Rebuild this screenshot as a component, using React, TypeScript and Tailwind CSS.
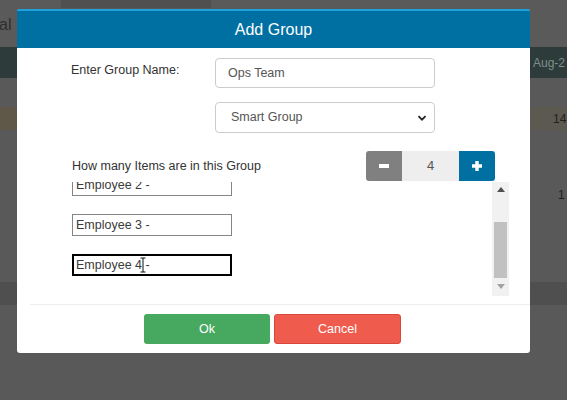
import React from 'react';

const font = { fontFamily: '"Liberation Sans", Arial, sans-serif' };

const Backdrop = () => (
  <div className="flex flex-col w-[567px] h-[400px] bg-[#595959] text-[#262626]" style={font}>
    <div className="h-[47px] bg-[#5a5a5a] flex items-center relative">
      <div className="absolute left-[61px] top-0 w-[150px] h-[8px] bg-[#505050]" />
      <span className="ml-[-1px] mt-[2px] text-[16px] text-[#2e2e2e]">al</span>
    </div>
    <div className="h-[31px] bg-[#2d3c3a] flex items-center justify-end">
      <span className="w-[34px] text-[12px] text-[#7d8f8c] overflow-hidden whitespace-nowrap">Aug-2</span>
    </div>
    <div className="h-[29px]" />
    <div className="h-[23px] bg-gradient-to-r from-[#5f5748] via-[#595959] to-[#5c5950] flex items-center justify-end">
      <span className="w-[14px] text-[12px] text-[#1f1f1f]">14</span>
    </div>
    <div className="h-[152px] flex justify-end">
      <span className="w-[9px] mt-[56px] text-[12px] text-[#1f1f1f]">1</span>
    </div>
    <div className="h-[23px] bg-[#4f4f4f]" />
    <div className="flex-1" />
  </div>
);

const EmployeeInput = ({ label, focused }: { label: string; focused?: boolean }) => (
  <div
    className={
      focused
        ? 'relative w-[160px] h-[22px] border-2 border-black flex items-center pl-[2px] text-[12.5px] text-[#3a3a3a]'
        : 'w-[160px] h-[22px] border border-[#858585] flex items-center pl-[3px] text-[12.5px] text-[#3a3a3a]'
    }
  >
    {label}
    {focused && (
      <svg className="absolute left-[66px] top-[1px]" width="6" height="16" viewBox="0 0 6 16">
        <path d="M0.5 1h5M3 1v14M0.5 15h5" stroke="#111" strokeWidth="1" fill="none" />
      </svg>
    )}
  </div>
);

const Modal = () => (
  <div
    className="absolute left-[17px] top-[9px] w-[513px] h-[344px] bg-white rounded-[3px] overflow-hidden flex flex-col"
    style={font}
  >
    <div className="h-[39px] bg-[#0070a3] border-t-2 border-[#1ea2dc] flex items-center justify-center text-white text-[16px]">
      Add Group
    </div>

    <div className="flex pt-[10px]">
      <div className="w-[198px] pl-[54px] pt-[3px] text-[12.5px] text-[#333]">Enter Group Name:</div>
      <div className="w-[220px] h-[30px] border border-[#cccccc] rounded-[4px] flex items-center pl-[12px] text-[12.5px] text-[#555]">
        Ops Team
      </div>
    </div>

    <div className="flex mt-[14px] pl-[198px]">
      <div className="w-[220px] h-[31px] border border-[#cccccc] rounded-[4px] flex items-center justify-between pl-[15px] pr-[7px] text-[12.5px] text-[#555]">
        Smart Group
        <svg width="10" height="8" viewBox="0 0 10 8">
          <path d="M1.5 2.2 5 5.7 8.5 2.2" stroke="#222" strokeWidth="1.8" fill="none" />
        </svg>
      </div>
    </div>

    <div className="flex items-center mt-[18px] pl-[55px]">
      <div className="w-[294px] text-[12.5px] text-[#333]">How many Items are in this Group</div>
      <div className="flex h-[30px] w-[129px] rounded-[3px] overflow-hidden">
        <div className="w-[36px] bg-[#808080] flex items-center justify-center">
          <div className="w-[10px] h-[4px] bg-white" />
        </div>
        <div className="w-[57px] bg-[#eeeeee] flex items-center justify-center text-[13px] text-[#555]">4</div>
        <div className="w-[36px] bg-[#0070a3] flex items-center justify-center">
          <svg width="12" height="12" viewBox="0 0 12 12">
            <path d="M6 1v10M1 6h10" stroke="#fff" strokeWidth="3.4" />
          </svg>
        </div>
      </div>
    </div>

    <div className="flex mt-px pl-[55px] h-[114px]">
      <div className="w-[420px] overflow-hidden">
        <div className="flex flex-col gap-[18px] mt-[-8px]">
          <EmployeeInput label="Employee 2 -" />
          <EmployeeInput label="Employee 3 -" />
          <EmployeeInput label="Employee 4 -" focused />
        </div>
      </div>
      <div className="w-[17px] bg-[#f1f1f1] flex flex-col items-center">
        <svg className="mt-[5px]" width="8" height="5" viewBox="0 0 8 5">
          <path d="M0 5 4 0 8 5Z" fill="#505050" />
        </svg>
        <div className="w-[13px] h-[56px] bg-[#c1c1c1] mt-[30px]" />
        <svg className="mt-[6px]" width="8" height="5" viewBox="0 0 8 5">
          <path d="M0 0 8 0 4 5Z" fill="#a3a3a3" />
        </svg>
      </div>
    </div>

    <div className="mt-[8px] ml-[13px] border-t border-[#eeeeee]" />

    <div className="flex gap-[4px] pl-[127px] mt-[9px]">
      <div className="w-[126px] h-[30px] bg-[#47a860] rounded-[3px] flex items-center justify-center text-white text-[12.5px]">
        Ok
      </div>
      <div className="w-[127px] h-[30px] bg-[#ef5c4e] border border-[#d9483b] rounded-[3px] flex items-center justify-center text-white text-[12.5px]">
        Cancel
      </div>
    </div>
  </div>
);

export default function App() {
  return (
    <div className="relative w-[567px] h-[400px] overflow-hidden">
      <Backdrop />
      <Modal />
    </div>
  );
}
